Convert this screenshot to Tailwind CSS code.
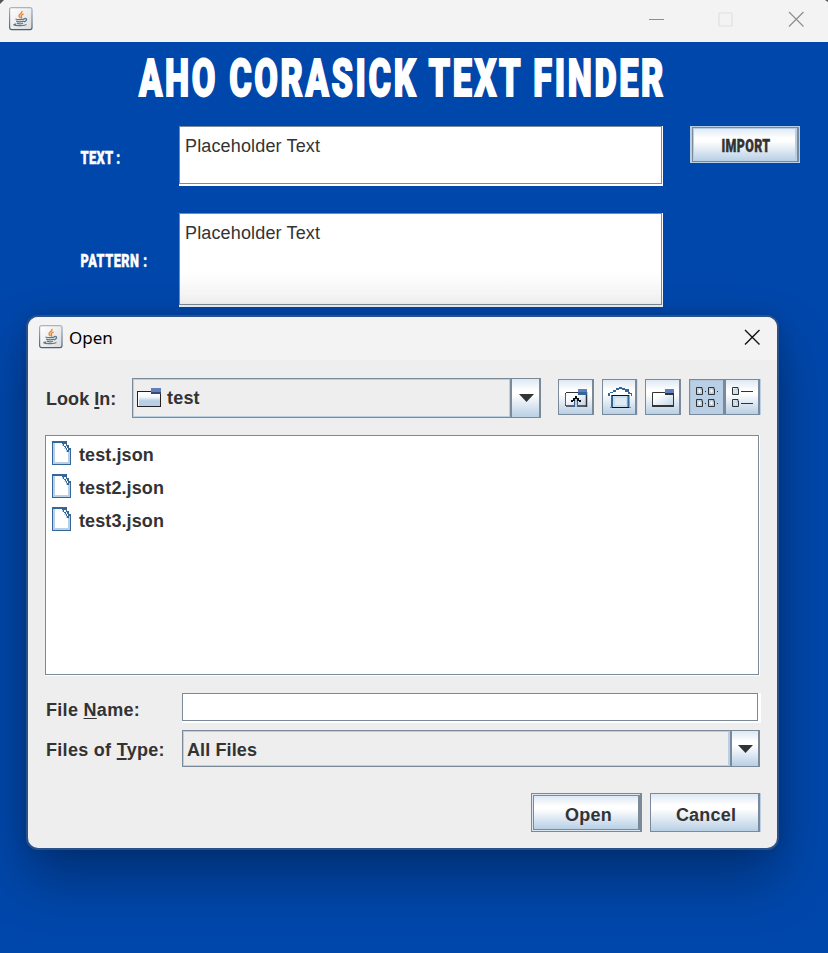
<!DOCTYPE html>
<html lang="en">
<head>
<meta charset="utf-8">
<title>Aho Corasick Text Finder</title>
<script src="https://cdn.jsdelivr.net/npm/@tailwindcss/browser@4"></script>
</head>
<body class="bg-[#0047ab]">
<svg class="absolute h-0 w-0">
  <linearGradient id="jg" x1="0" y1="0" x2="1" y2="1"><stop offset="0" stop-color="#fff"/><stop offset="1" stop-color="#dcdcdc"/></linearGradient>
  <linearGradient id="jb" x1="0" y1="0" x2="0" y2="1"><stop offset="0" stop-color="#a5b5c3"/><stop offset="1" stop-color="#45647c"/></linearGradient>
  <symbol id="java" viewBox="0 0 24 24">
    <rect x=".6" y=".6" width="22.4" height="22" rx="2" fill="url(#jg)" stroke="url(#jb)" stroke-width="1.2"/>
    <path d="M12.7 4c1.6 2.2-3.8 3.2-2.6 5.2.3.8 1 1.2 1.2 2M14.6 7c-2 .7-2.9 1.5-2.2 2.5.5.7.4 1.2-.4 1.9" fill="none" stroke="#ee8529" stroke-width="1.4"/>
    <path d="M6.5 12c2 .9 7.5.8 9-.1M7.2 14.2c2 .7 5.8.7 7.6 0M7.8 16.2c2 .7 4.6.7 6.2 0M15.2 11.6c3.1-1 3.3 2.4-.3 3.2M4.6 17.8c2 1.2 11.5 1 12.800-.5M7 17.2c-1-.1-2.4.2-2.4.6" fill="none" stroke="#587990" stroke-width="1.25"/>
  </symbol>
  <symbol id="file" viewBox="0 0 19 24">
    <path d="M0 0H15V4H17V7H19V24H0Z" fill="#336699"/>
    <path d="M1 2H10V3H13V7H15V9H18V23H1Z" fill="#b8cfe5"/>
    <path d="M3 2H10V5H12V8H14V11H16V21H3Z" fill="#fff"/>
    <path d="M10 2h2v1h1v2h1v2h1v2h2v2h-2v-2h-1v-2h-2v-2h-1v-2h-1z" fill="#336699"/>
    <path d="M12 3h2v2h-2zM14 5h1v2h-1zM15 7h1v2h-1zM12 6h1v1h-1z" fill="#fff"/>
  </symbol>
  <linearGradient id="fg" x1="0" y1="0" x2="0" y2="1"><stop offset="0" stop-color="#fff"/><stop offset=".3" stop-color="#f4f8fc"/><stop offset=".6" stop-color="#b8cfe5"/></linearGradient>
  <linearGradient id="ng" x1="0" y1="0" x2="1" y2="1"><stop offset=".25" stop-color="#fff"/><stop offset="1" stop-color="#b8cfe5"/></linearGradient>
</svg>

<div class="relative flex h-[953px] w-[828px] flex-col overflow-hidden bg-[#0047ab] font-['Liberation_Sans',Arial,sans-serif] text-[18px] text-[#333]">
  <header class="flex h-[42px] shrink-0 items-start bg-[#f3f3f3] pl-[9px] pt-[7px]">
    <svg class="h-6 w-6"><use href="#java"/></svg>
    <svg class="ml-auto mr-[22px] mt-[4px] h-[18px] w-[158px]" viewBox="0 0 158 18" fill="none">
      <path d="M1 8.5H16" stroke="#8e8e8e"/>
      <rect x="71" y="2" width="13" height="13" rx="1" stroke="#dfdfdf" stroke-width="1.2"/>
      <path d="M141 1l14.500 14.500M155.500 1L141 15.500" stroke="#8e8e8e" stroke-width="1.2"/>
    </svg>
  </header>
  <svg class="absolute left-0 top-0 h-[5px] w-[828px]"><path d="M0 0H4L0 4ZM828 0H825L828 2Z" fill="#555"/></svg>

  <main class="flex flex-col">
    <svg class="h-[84px] w-[828px] font-[Roboto,sans-serif] text-[52px] font-black tracking-[4px]" viewBox="0 42 828 84" fill="#fff" stroke="#fff" stroke-width="1.800">
      <text y="95.500" x="139" textLength="527" lengthAdjust="spacingAndGlyphs">AHO CORASICK TEXT FINDER</text>
    </svg>
    <div class="grid grid-cols-[99px_484px_110px] gap-x-0 gap-y-[27px] pl-[80px]">
      <svg class="h-[60px] w-[99px] font-[Roboto,sans-serif] text-[18px] font-black tracking-[.3px]" fill="#fff" stroke="#fff" stroke-width=".4">
        <text x="0.500" y="38" textLength="40" lengthAdjust="spacingAndGlyphs">TEXT :</text>
      </svg>
      <div class="h-[60px] bg-white pb-[2px] pr-px"><div class="h-full border border-[#7a8a99] pl-[5px] pt-[9px] leading-[21px] tracking-[.15px]">Placeholder Text</div></div>
      <button class="relative left-[27px] h-[37px] w-[110px] bg-[#b8cfe5] p-px pl-[2px] pr-[1px]">
        <span class="flex h-[35px] border border-r-2 border-[#7a8a99] bg-[linear-gradient(#dde8f3,#fff_30%,#fff_40%,#b8cfe5)] shadow-[inset_-2px_0_#b8cfe5,inset_1px_1px_#b8cfe5]">
          <svg class="h-[33px] w-full font-[Roboto,sans-serif] text-[18px] font-black tracking-[.5px]" fill="#333" stroke="#333" stroke-width=".4"><text x="28.500" y="24" textLength="49" lengthAdjust="spacingAndGlyphs">IMPORT</text></svg>
        </span>
      </button>
      <svg class="h-[94px] w-[99px] font-[Roboto,sans-serif] text-[18px] font-black tracking-[.7px]" fill="#fff" stroke="#fff" stroke-width=".4">
        <text x="0.500" y="54" textLength="67" lengthAdjust="spacingAndGlyphs">PATTERN :</text>
      </svg>
      <div class="h-[94px] bg-[linear-gradient(#fff_60%,#f2f2f2)] pb-[2px] pr-px"><div class="h-full border border-[#7a8a99] pl-[5px] pt-[9px] leading-[21px] tracking-[.15px]">Placeholder Text</div></div>
    </div>
  </main>

  <section class="absolute left-[26px] top-[315px] h-[535px] w-[753px] overflow-visible rounded-[12px] border-2 border-[#2b5189] bg-[#eee] font-bold shadow-[0_28px_56px_rgba(0,0,0,.32),0_0_18px_rgba(0,0,0,.12)]">
    <div class="flex h-[43px] items-start rounded-t-[10px] bg-[#f3f3f3] pl-[11px] pt-[8px]">
      <svg class="h-6 w-6"><use href="#java"/></svg>
      <span class="ml-[6px] font-['Noto_Sans',sans-serif] text-[17px] font-normal leading-[25px] text-black">Open</span>
      <svg class="ml-auto mr-[16px] mt-[4px] h-[17px] w-[17px]" fill="none" stroke="#111" stroke-width="1.400"><path d="M1 1L15.500 15.500M15.500 1L1 15.500"/></svg>
    </div>

    <div class="ml-[18px] mt-[18px] flex h-[40px]">
      <span class="w-[86px] whitespace-nowrap leading-[42px] tracking-[.05px]">Look <span class="underline decoration-2 underline-offset-[2px]">I</span>n:</span>
      <div class="flex w-[409px] border border-[#7a8a99]">
        <div class="flex flex-1 items-center border border-[#b8cfe5] pl-[3px]">
          <svg class="h-[20px] w-[24px]" viewBox="0 0 24 20"><rect x=".5" y="3.500" width="23" height="15" fill="#fff" stroke="#222"/><rect x="2" y="5" width="21" height="13" fill="url(#fg)"/><path d="M14 0H24V5H14Z" fill="#5f7fbd"/><path d="M14 4H24V6H14Z" fill="#334c70"/></svg>
          <span class="ml-[6px] mt-px tracking-[.2px]">test</span>
        </div>
        <div class="flex w-[30px] items-center justify-center border-l-2 border-r border-[#7a8a99] bg-[linear-gradient(#dde8f3,#fff_30%,#fff_40%,#b8cfe5)]"><svg class="ml-px h-[8px] w-[15px]"><path d="M0 0H15L7.500 8Z" fill="#333"/></svg></div>
      </div>
      <div class="ml-[17px] mt-px flex h-[36px]">
        <button class="mr-[8px] w-[36px] border border-r-2 border-[#7a8a99] bg-[linear-gradient(#dde8f3,#fff_30%,#fff_40%,#b8cfe5)]">
          <svg class="h-[34px] w-[33px]" viewBox="1 1 33 34"><path d="M7 14H20V16H29V28H7Z" fill="url(#ng)"/><path d="M7.500 27V14M8 13.500H20" stroke="#333" fill="none"/><path d="M7.500 15V26" stroke="#336699"/><path d="M8 27H29M28.500 13V28" stroke="#333" stroke-width="1.500"/><path d="M20 10H29V13H20Z" fill="#5f7fbd"/><path d="M20 13H29V16H20Z" fill="#336699"/><path d="M16 20H20V28H16Z" fill="#b8cfe5"/><path d="M16.500 21V28M19.500 21V28" stroke="#336699"/><path d="M17 17h2v2h2v2h2v2h-2v-1h-2v-2h-2v2h-2v1h-2v-2h2v-2h2z" fill="#111"/></svg>
        </button>
        <button class="mr-[8px] w-[35px] border border-r-2 border-[#7a8a99] bg-[linear-gradient(#dde8f3,#fff_30%,#fff_40%,#b8cfe5)] shadow-[1px_0_#d3dfeb]">
          <svg class="h-[34px] w-[32px]" viewBox="1 1 32 34"><path d="M7 16V14L17 9L20 9L29 14V16Z" fill="#fff"/><path d="M17 8h3v2h-3zM14 9h3v2h-3zM20 9h3v2h-3zM11 11h3v2h-3zM23 10h4v3h-4zM8 13h3v1h-3zM6 14h2v3h-2zM26 13h2v1h2v3h-1v-2h-3z" fill="#336699"/><rect x="11" y="17" width="15" height="11" fill="#c9dcec"/><rect x="13" y="19" width="11" height="7" fill="#dfeaf5"/><path d="M10 16V28M26.500 16V28" stroke="#336699" stroke-width="2"/><path d="M10 16.500H27M10 28.500H27" stroke="#111"/><path d="M8 28.500H10M27 28.500H29" stroke="#7a8a99"/></svg>
        </button>
        <button class="mr-[8px] w-[36px] border border-r-2 border-[#7a8a99] bg-[linear-gradient(#dde8f3,#fff_30%,#fff_40%,#b8cfe5)]">
          <svg class="h-[34px] w-[33px]" viewBox="1 1 33 34"><path d="M7 14H29V28H7Z" fill="url(#ng)"/><path d="M7.500 28V13.500H20" stroke="#333" fill="none"/><path d="M8 27H29" stroke="#333" stroke-width="2"/><path d="M28.500 13V28" stroke="#333"/><path d="M20 10H29V14H20Z" fill="#5f7fbd"/><path d="M20 14H29V16H20Z" fill="#333"/></svg>
        </button>
        <button class="w-[36px] border border-r-2 border-[#7a8a99] bg-[#b8cfe5] shadow-[inset_1px_1px_#aec3da]">
          <svg class="h-[34px] w-[33px]" viewBox="1 1 33 34" fill="none" stroke="#333"><path d="M7.500 8.500h4M13.500 10v5.500h-6v-7M19.500 8.500h4M25.500 10v5.500h-6v-7M7.500 20.500h4M13.500 22v5.500h-6v-7M19.500 20.500h4M25.500 22v5.500h-6v-7M11 8.500h2v2M23 8.500h2v2M11 20.500h2v2M23 20.500h2v2M16 12.500h1M28 12.500h1M16 24.500h1M28 24.500h1"/><path d="M10 11h1v2h-1zM22 11h1v2h-1zM10 23h1v2h-1zM22 23h1v2h-1z" stroke="#fff"/></svg>
        </button>
        <button class="w-[35px] border border-r-2 border-[#7a8a99] bg-[linear-gradient(#dde8f3,#fff_30%,#fff_40%,#b8cfe5)] shadow-[1px_0_#b8cfe5]">
          <svg class="h-[34px] w-[32px]" viewBox="1 1 32 34" fill="none" stroke="#333"><path d="M9 10h3v5h-3zM9 22h3v5h-3z" fill="#dbe8f3" stroke="#b8cfe5"/><path d="M7.500 8.500h4M13.500 10v5.500h-6v-7M7.500 20.500h4M13.500 22v5.500h-6v-7M11 8.500h2v2M11 20.500h2v2M16 12.500h12M16 24.500h12"/></svg>
        </button>
      </div>
    </div>

    <div class="ml-[17px] mt-[17px] h-[241px] w-[715px] bg-white">
      <div class="h-[240px] w-[714px] border border-[#7a8a99] pl-[6px] pt-[5px] tracking-[.1px]">
        <div class="flex h-[33px] items-start"><svg class="h-6 w-[19px]"><use href="#file"/></svg><span class="ml-[8px] leading-[28px]">test.json</span></div>
        <div class="flex h-[33px] items-start"><svg class="h-6 w-[19px]"><use href="#file"/></svg><span class="ml-[8px] leading-[28px]">test2.json</span></div>
        <div class="flex h-[33px] items-start"><svg class="h-6 w-[19px]"><use href="#file"/></svg><span class="ml-[8px] leading-[28px]">test3.json</span></div>
      </div>
    </div>

    <div class="ml-[18px] mt-[17px] flex">
      <span class="w-[136px] leading-[34px] tracking-[.3px]">File <span class="underline decoration-1 underline-offset-[2px]">N</span>ame:</span>
      <div class="h-[30px] w-[579px] bg-white"><div class="h-[28px] w-[576px] border border-[#7a8a99]"></div></div>
    </div>
    <div class="ml-[18px] mt-[3px] flex h-[37px]">
      <span class="w-[136px] leading-[40px] tracking-[.3px]">Files of <span class="underline decoration-2 underline-offset-[2px]">T</span>ype:</span>
      <div class="flex w-[578px] border border-[#7a8a99]">
        <div class="flex-1 border border-r-2 border-[#b8cfe5] pl-[3px] leading-[37px] tracking-[.12px]">All Files</div>
        <div class="flex w-[29px] items-center justify-center border-l-2 border-r border-[#7a8a99] bg-[linear-gradient(#dde8f3,#fff_30%,#fff_40%,#b8cfe5)]"><svg class="ml-px h-[8px] w-[15px]"><path d="M0 0H15L7.500 8Z" fill="#333"/></svg></div>
      </div>
    </div>
    <div class="ml-[503px] mt-[26px] flex h-[39px] gap-[8px]">
      <button class="w-[111px] border border-r-2 border-[#7a8a99] bg-[#dbe6f1] p-px pr-0"><span class="block h-[35px] border border-r-2 border-[#7a8a99] bg-[linear-gradient(#dde8f3,#fff_30%,#fff_40%,#b8cfe5)] pl-[5px] leading-[38px] tracking-[.2px]">Open</span></button>
      <button class="w-[110px] border border-r-2 border-[#7a8a99] bg-[linear-gradient(#dde8f3,#fff_30%,#fff_40%,#b8cfe5)] pl-[3px] pt-[6px] tracking-[.2px] shadow-[1px_0_#b8cfe5]">Cancel</button>
    </div>
  </section>
</div>
</body>
</html>
